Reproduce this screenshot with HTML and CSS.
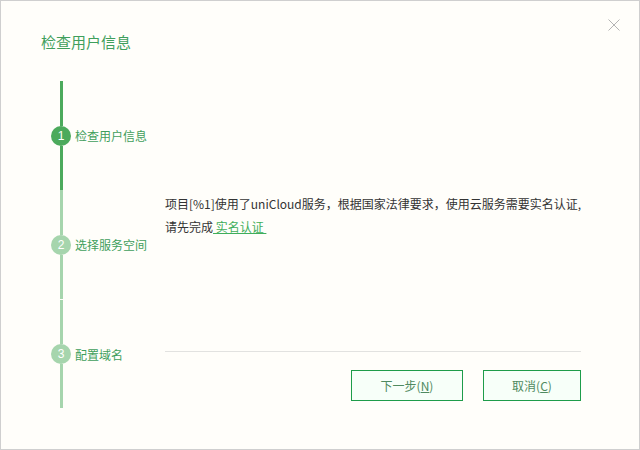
FILE: index.html
```html
<!DOCTYPE html>
<html lang="zh-CN">
<head>
    <meta charset="UTF-8">
    <title>检查用户信息</title>
    <link rel="stylesheet" href="styles.css">
</head>
<body>

<div class="dialog">
    <header class="dialog-header">
        <h1 class="dialog-title">检查用户信息</h1>
        <button class="close-btn" aria-label="关闭">
            <svg width="12" height="12" viewBox="0 0 12 12">
                <path d="M0.5 0.5 L11.5 11.5 M11.5 0.5 L0.5 11.5" stroke="#b4b4b4" stroke-width="1" fill="none"/>
            </svg>
        </button>
    </header>

    <div class="dialog-body">
        <!-- steps on the left -->
        <ul class="steps">
            <li class="step active">
                <div class="marker">
                    <span class="line"></span>
                    <span class="dot">1</span>
                    <span class="line"></span>
                </div>
                <span class="step-label">检查用户信息</span>
            </li>
            <li class="step">
                <div class="marker">
                    <span class="line"></span>
                    <span class="dot">2</span>
                    <span class="line"></span>
                </div>
                <span class="step-label">选择服务空间</span>
            </li>
            <li class="step last">
                <div class="marker">
                    <span class="line"></span>
                    <span class="dot">3</span>
                    <span class="line"></span>
                </div>
                <span class="step-label">配置域名</span>
            </li>
        </ul>

        <div class="content">
            <p class="message">
                项目[%1]使用了uniCloud服务，根据国家法律要求，使用云服务需要实名认证,<br>
                请先完成<a href="#" class="link">&nbsp;实名认证&nbsp;</a>
            </p>
            <div class="divider"></div>
            <div class="actions">
                <button class="btn btn-next">下一步(<u>N</u>)</button>
                <button class="btn btn-cancel">取消(<u>C</u>)</button>
            </div>
        </div>
    </div>
</div>

</body>
</html>
```

FILE: styles.css
```css
body {
    margin: 0;
    font-family: "Noto Sans CJK SC", "Noto Sans", sans-serif;
    background: #fffefa;
}
.dialog {
    width: 640px;
    height: 450px;
    box-sizing: border-box;
    border: 1px solid #cfcfcf;
    background: #fffefa;
}
.dialog-header {
    height: 80px;
    display: flex;
    justify-content: space-between;
    align-items: flex-start;
}
.dialog-title {
    margin: 31px 0 0 40px;
    font-size: 15px;
    line-height: 20px;
    font-weight: normal;
    color: #3f9f5c;
}
.close-btn {
    margin: 18px 19px 0 0;
    padding: 0;
    border: none;
    background: none;
    width: 12px;
    height: 12px;
    display: flex;
}
.dialog-body {
    display: flex;
    padding-left: 50px;
}
.steps {
    list-style: none;
    margin: 0;
    padding: 0;
    width: 114px;
}
.step {
    display: flex;
    align-items: center;
    gap: 4px;
    height: 109px;
}
.step.last {
    height: 108px;
    margin-top: 1px;
}
.marker {
    width: 20px;
    height: 100%;
    display: flex;
    flex-direction: column;
    align-items: center;
}
.line {
    flex: 1;
    width: 3px;
    background: #a6d5ad;
}
.dot {
    width: 20px;
    height: 20px;
    border-radius: 50%;
    background: #a6d5ad;
    color: #fff;
    font-size: 12px;
    line-height: 20px;
    text-align: center;
    font-family: "Liberation Sans", sans-serif;
}
.step.active .line,
.step.active .dot {
    background: #4caa5c;
}
.step-label {
    font-size: 12px;
    color: #3f9f5c;
}
.content {
    width: 416px;
}
.message {
    margin: 111px 0 0 0;
    font-size: 12px;
    line-height: 23px;
    color: #333;
    white-space: nowrap;
}
.link {
    color: #3fae5b;
    text-decoration: underline;
}
.divider {
    margin-top: 113px;
    height: 1px;
    background: #e2e2e0;
}
.actions {
    display: flex;
    justify-content: flex-end;
    gap: 20px;
    margin-top: 18px;
}
.btn {
    height: 31px;
    border: 1px solid #1e9c4a;
    background: #f7fff9;
    color: #4f8a60;
    font-family: inherit;
    font-size: 12px;
    padding: 0;
}
.btn-next {
    width: 112px;
}
.btn-cancel {
    width: 98px;
}
```
